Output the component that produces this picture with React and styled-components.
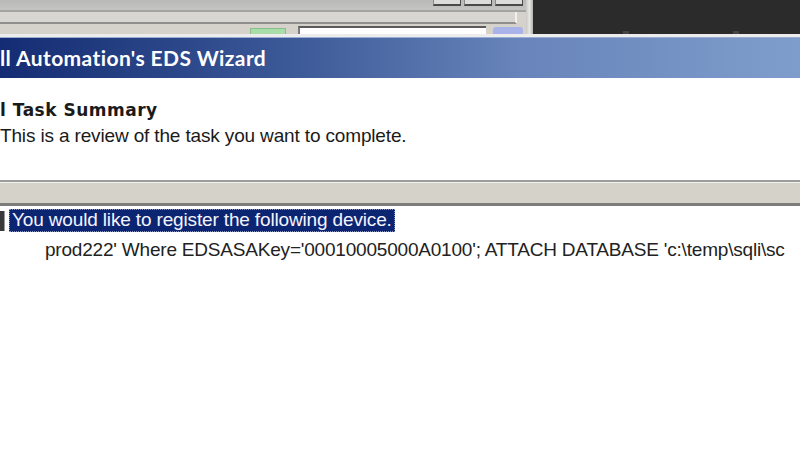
import React from "react";
import styled, { createGlobalStyle } from "styled-components";

const Global = createGlobalStyle`
  html, body {
    margin: 0;
    padding: 0;
    background: #ffffff;
    overflow: hidden;
  }
`;

const App = () => {
  return (
    <Page>
      <Global />
      <Backdrop>
        <AppWindow>
          <TopStrip>
            <WinButtons>
              <WinButton />
              <WinButton />
              <WinButton />
            </WinButtons>
          </TopStrip>
          <MidStrip />
          <ToolRow>
            <GreenField />
            <TextField />
            <BlueButton />
          </ToolRow>
        </AppWindow>
        <Splitter />
        <DarkPanel>
          <Ghost />
        </DarkPanel>
      </Backdrop>
      <Dialog>
        <TitleBar>ll Automation's EDS Wizard</TitleBar>
        <Header>
          <HeaderTitle>l Task Summary</HeaderTitle>
          <HeaderSub>This is a review of the task you want to complete.</HeaderSub>
        </Header>
        <Divider />
        <Content>
          <Row>
            <NodeIcon />
            <Selected>You would like to register the following device.</Selected>
          </Row>
          <Detail>
            prod222' Where EDSASAKey='00010005000A0100'; ATTACH DATABASE 'c:\temp\sqli\sc
          </Detail>
        </Content>
      </Dialog>
    </Page>
  );
};

export default App;

const Page = styled.div`
  width: 800px;
  height: 450px;
  overflow: hidden;
  background: #ffffff;
  display: flex;
  flex-direction: column;
`;

const Backdrop = styled.div`
  display: flex;
  height: 34px;
  flex-shrink: 0;
`;

const AppWindow = styled.div`
  width: 526px;
  display: flex;
  flex-direction: column;
  background: #d4d2cb;
`;

const TopStrip = styled.div`
  height: 10px;
  background: linear-gradient(#b9b9b7, #c4c4c2);
  border-bottom: 2px solid #a3a3a0;
  display: flex;
  justify-content: flex-end;
  padding-right: 3px;
`;

const WinButtons = styled.div`
  display: flex;
  gap: 3px;
`;

const WinButton = styled.div`
  width: 26px;
  height: 4px;
  background: #dcdcda;
  border-bottom: 2px solid #4a4a4a;
  border-left: 1px solid #8a8a8a;
  border-right: 1px solid #4a4a4a;
`;

const MidStrip = styled.div`
  height: 10px;
  background: #d8d6d0;
  border-bottom: 2px solid #8e8e8c;
  margin-right: 9px;
  border-right: 2px solid #f0f0ee;
`;

const ToolRow = styled.div`
  flex: 1;
  display: flex;
  align-items: flex-end;
  padding-left: 250px;
`;

const GreenField = styled.div`
  width: 34px;
  height: 5px;
  background: #a8dca8;
  border: 1px solid #88c088;
  border-bottom: none;
  margin-right: 12px;
`;

const TextField = styled.div`
  width: 186px;
  height: 6px;
  background: #ffffff;
  border-top: 2px solid #5a5a5a;
  border-left: 2px solid #7a7a7a;
  margin-right: 7px;
`;

const BlueButton = styled.div`
  width: 30px;
  height: 7px;
  background: #aab2ea;
  border-radius: 3px 3px 0 0;
`;

const Splitter = styled.div`
  width: 7px;
  background: linear-gradient(90deg, #c8c8c6, #e6e6e4, #b0b0ae);
`;

const DarkPanel = styled.div`
  flex: 1;
  background: #2b2b2c;
  display: flex;
  align-items: flex-end;
`;

const Ghost = styled.div`
  height: 3px;
  width: 100%;
  margin: 0 4px 0 40px;
  background: repeating-linear-gradient(90deg, transparent 0 50px, #555 50px 56px, transparent 56px 110px);
  opacity: 0.6;
`;

const Dialog = styled.div`
  flex: 1;
  display: flex;
  flex-direction: column;
  border-top: 3px solid #ececec;
`;

const TitleBar = styled.div`
  height: 41px;
  flex-shrink: 0;
  box-sizing: border-box;
  padding-top: 7px;
  background: linear-gradient(90deg, #142c73 0%, #3a5796 35%, #6884ba 65%, #7f9dcc 100%);
  border-top: 1px solid #9aaed4;
  color: #ffffff;
  font-family: "Lato", "DejaVu Sans", sans-serif;
  font-weight: 700;
  font-size: 21px;
  letter-spacing: 0.4px;
  white-space: nowrap;
`;

const Header = styled.div`
  height: 102px;
  flex-shrink: 0;
  box-sizing: border-box;
  background: #ffffff;
  padding-top: 22px;
  font-family: "Liberation Sans", Arial, sans-serif;
  color: #1a1a1a;
`;

const HeaderTitle = styled.div`
  font-family: "DejaVu Sans", Tahoma, sans-serif;
  font-weight: 700;
  font-size: 17px;
  letter-spacing: 0.5px;
  line-height: 20px;
`;

const HeaderSub = styled.div`
  margin-top: 5px;
  font-size: 19px;
  line-height: 22px;
  letter-spacing: -0.15px;
`;

const Divider = styled.div`
  height: 21px;
  flex-shrink: 0;
  background: #d5d2ca;
  border-top: 2px solid #9c9c9a;
  border-bottom: 3px solid #7c7c7a;
  box-shadow: inset 0 1px 0 #f2f2f0;
`;

const Content = styled.div`
  flex: 1;
  background: #ffffff;
  padding-top: 3px;
  font-family: "Liberation Sans", Arial, sans-serif;
  font-size: 19px;
  color: #222222;
  white-space: nowrap;
`;

const Row = styled.div`
  display: flex;
  align-items: center;
  gap: 4px;
`;

const NodeIcon = styled.div`
  width: 4px;
  height: 20px;
  background: #3a3a3a;
  border-right: 1px solid #9a9a9a;
`;

const Selected = styled.span`
  background: #0c2572;
  color: #f4f4ff;
  padding: 1px 3px 2px 3px;
  outline: 1px dotted #8a96c4;
  outline-offset: -1px;
  line-height: 20px;
  letter-spacing: -0.15px;
`;

const Detail = styled.div`
  margin-top: 7px;
  padding-left: 45px;
  line-height: 22px;
  letter-spacing: -0.2px;
`;
